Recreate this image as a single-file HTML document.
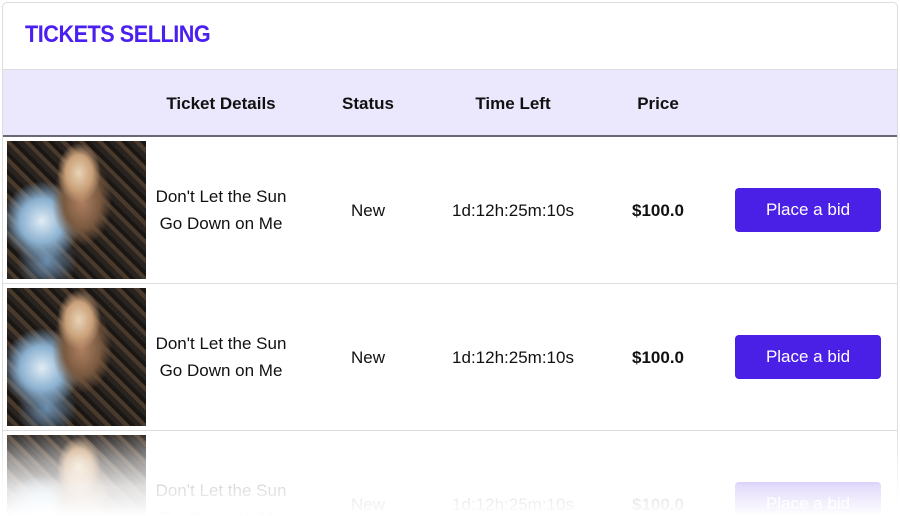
<!DOCTYPE html>
<html><head><meta charset="utf-8"><style>
*{margin:0;padding:0;box-sizing:border-box}
html,body{width:900px;height:516px;overflow:hidden}
body{background:#fff;font-family:"Liberation Sans",sans-serif;position:relative}
.card{position:absolute;left:2px;top:2px;width:896px;height:520px;border:1px solid #ddd;border-radius:5px;overflow:hidden}
h1{position:absolute;left:22px;top:18px;font-size:24px;font-weight:900;color:#4a1ff0;letter-spacing:-0.5px;transform:scaleX(0.9);transform-origin:left}
.head{position:absolute;left:0;top:66px;width:896px;height:68px;background:#ebe7fd;border-top:1px solid #ddd;border-bottom:2px solid #6a6875}
.c{position:absolute;text-align:center;font-size:17px;color:#111}
.head .c{top:24px;font-weight:bold}
.row{position:absolute;left:0;width:896px;height:147px;border-bottom:1px solid #ddd}
.img{position:absolute;left:4px;top:4px;width:139px;height:138px;background:
radial-gradient(ellipse 22px 30px at 72px 32px,#e8d3b5 0,#c9a079 60%,transparent 100%),
radial-gradient(ellipse 30px 45px at 75px 60px,#b08062 0,#7a5a40 60%,transparent 100%),
radial-gradient(ellipse 40px 40px at 35px 80px,#e0ecf5 0,#8ab0d0 55%,transparent 100%),
radial-gradient(ellipse 30px 30px at 40px 120px,#6c8fb0 0,transparent 100%),
repeating-linear-gradient(45deg,#2a2420 0 5px,#4a3a2c 5px 9px,#1a1614 9px 13px);}
.row .c{top:0;height:146px;display:flex;align-items:center;justify-content:center;line-height:27px}
.btn{position:absolute;left:732px;top:51px;width:146px;height:44px;background:#4a1fe6;color:#fff;border-radius:4px;font-size:17px;display:flex;align-items:center;justify-content:center}
.fade{position:absolute;left:0;top:432px;width:900px;height:84px;background:linear-gradient(to bottom,rgba(255,255,255,0.05),rgba(255,255,255,0.55) 35%,rgba(255,255,255,0.85) 65%,#fff)}
</style></head><body>
<div class="card">
<h1>TICKETS SELLING</h1>
<div class="head">
<div class="c" style="left:148px;width:140px">Ticket Details</div>
<div class="c" style="left:315px;width:100px">Status</div>
<div class="c" style="left:440px;width:140px">Time Left</div>
<div class="c" style="left:605px;width:100px">Price</div>
</div>
<div class="row" style="top:134px">
<div class="img"></div>
<div class="c" style="left:143px;width:150px">Don't Let the Sun<br>Go Down on Me</div>
<div class="c" style="left:315px;width:100px">New</div>
<div class="c" style="left:430px;width:160px">1d:12h:25m:10s</div>
<div class="c" style="left:605px;width:100px;font-weight:bold">$100.0</div>
<div class="btn">Place a bid</div>
</div>
<div class="row" style="top:281px">
<div class="img"></div>
<div class="c" style="left:143px;width:150px">Don't Let the Sun<br>Go Down on Me</div>
<div class="c" style="left:315px;width:100px">New</div>
<div class="c" style="left:430px;width:160px">1d:12h:25m:10s</div>
<div class="c" style="left:605px;width:100px;font-weight:bold">$100.0</div>
<div class="btn">Place a bid</div>
</div>
<div class="row" style="top:428px">
<div class="img"></div>
<div class="c" style="left:143px;width:150px">Don't Let the Sun<br>Go Down on Me</div>
<div class="c" style="left:315px;width:100px">New</div>
<div class="c" style="left:430px;width:160px">1d:12h:25m:10s</div>
<div class="c" style="left:605px;width:100px;font-weight:bold">$100.0</div>
<div class="btn">Place a bid</div>
</div>
</div>
<div class="fade"></div>
</body></html>
